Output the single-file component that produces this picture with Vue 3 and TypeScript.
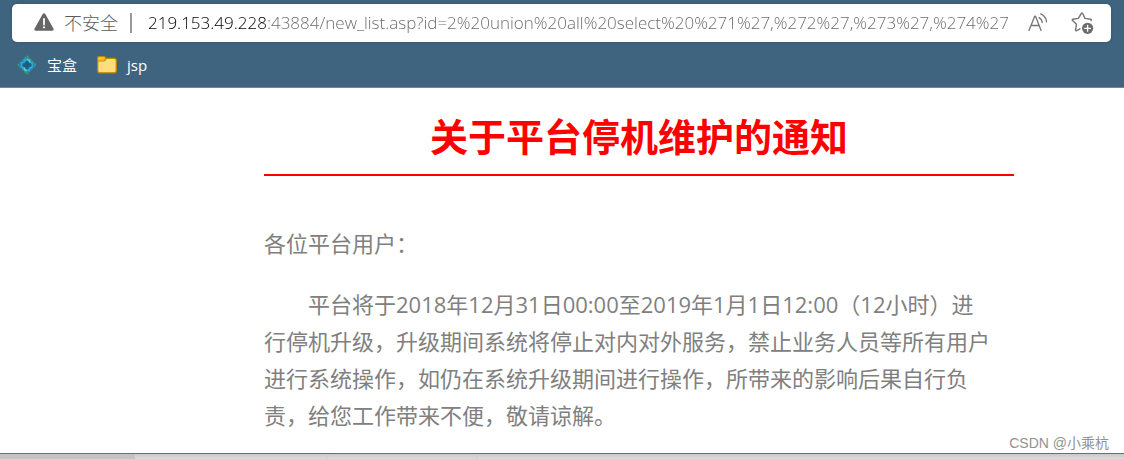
<script setup lang="ts">
import { ref } from 'vue'

interface Bookmark {
  label: string
  kind: 'gem' | 'folder'
}

const address = ref('219.153.49.228:43884/new_list.asp?id=2%20union%20all%20select%20%271%27,%272%27,%273%27,%274%27')

const bookmarks: Bookmark[] = [
  { label: '宝盒', kind: 'gem' },
  { label: 'jsp', kind: 'folder' },
]
</script>

<template>
  <div class="window" lang="zh-CN">
    <header class="chrome">
      <form class="address-bar" @submit.prevent>
        <button class="security" type="button">
          <svg width="20" height="20" viewBox="0 0 20 20" aria-hidden="true">
            <path d="M10 .2c.6 0 1 .3 1.300.8l8.200 14.700c.5 1-.1 2-1.300 2H1.800c-1.200 0-1.800-1-1.300-2L8.700 1c.3-.5.7-.8 1.300-.8z" fill="#666" />
            <path d="M10 6v5.500" stroke="#fff" stroke-width="1.800" stroke-linecap="round" />
            <circle cx="10" cy="14.300" r="1.100" fill="#fff" />
          </svg>
          <span>不安全</span>
        </button>
        <span class="divider"></span>
        <input v-model="address" class="address" type="text" aria-label="地址" spellcheck="false" />
        <button class="tool" type="button" aria-label="大声朗读">
          <svg width="22" height="22" viewBox="0 0 22 22" fill="none" stroke="#757575" stroke-width="1.300" stroke-linecap="round" stroke-linejoin="round" aria-hidden="true">
            <path d="M1 18.500L6.700 4.200h.8l5.600 14.300M3 13.500H11.200" />
            <path d="M11 5.600c1.900 1 3 2.700 3.200 4.900M12.700 1.900c3.500 1.500 5.600 4.300 5.800 8" />
          </svg>
        </button>
        <button class="tool" type="button" aria-label="添加到收藏夹">
          <svg width="24" height="24" viewBox="0 0 24 24" fill="none" aria-hidden="true">
            <path d="M8.900 17.800l-3.300 1.800c-.7.4-1.200 0-1.100-.7l1-5.600-4-3.900c-.5-.5-.3-1.100.4-1.200l5.500-.8 2.900-5.100c.3-.6.9-.6 1.200 0L14 7.400l5.600.8c.7.100.9.700.4 1.200" stroke="#757575" stroke-width="1.400" stroke-linecap="round" stroke-linejoin="round" />
            <circle cx="16.600" cy="17.300" r="5.600" fill="#6c6c6c" />
            <path d="M16.600 14.400v5.800M13.700 17.300h5.800" stroke="#fff" stroke-width="1.300" stroke-linecap="round" />
          </svg>
        </button>
      </form>
      <nav class="bookmarks" aria-label="收藏夹">
        <a v-for="item in bookmarks" :key="item.label" class="bookmark" href="#">
          <svg v-if="item.kind === 'gem'" width="20" height="20" viewBox="0 0 20 20" fill="none" aria-hidden="true">
            <path d="M10 .5L19.500 10 10 19.500.5 10z" fill="#2b7c87" />
            <path d="M10 1.200L18.800 10 10 18.800 1.200 10z" stroke="#38a28d" stroke-width="1.200" stroke-dasharray="2.500 .8" />
            <path d="M7.200 7.200C7.200 3.600 12.800 3.600 12.800 7.200c3.600 0 3.600 5.600 0 5.600 0 3.600-5.600 3.600-5.600 0-3.600 0-3.600-5.600 0-5.600z" fill="#255b7a" stroke="#27a5f0" stroke-width="1.800" />
            <path d="M10 4.500c1.700 0 2.800 1.200 2.800 2.700M7.200 12.800c0 1.600 1.100 2.700 2.800 2.700" stroke="#55d3b0" stroke-width="1.600" />
          </svg>
          <svg v-else width="20" height="20" viewBox="0 0 20 20" fill="none" aria-hidden="true">
            <path d="M.7 3.200c0-1 .5-1.500 1.500-1.500h4.600c.5 0 .9.200 1.300.6l1 1.100h8.200c1.300 0 2 .7 2 2v10.400c0 1.300-.7 2-2 2H2.700c-1.300 0-2-.7-2-2z" fill="#ffdc7c" stroke="#b98900" stroke-width="1.300" />
            <path d="M1.300 3.200c0-.6.300-.9.900-.9h4.500c.4 0 .6.100.9.400l1 1-1.300 1.400c-.3.300-.6.400-1 .4h-5z" fill="#f9c11d" />
            <path d="M.8 6h5.500c.5 0 .9-.2 1.200-.5l1.700-1.900" stroke="#b98900" stroke-width="1.200" />
          </svg>
          <span>{{ item.label }}</span>
        </a>
      </nav>
    </header>

    <main class="page">
      <h1 class="title">关于平台停机维护的通知</h1>
      <div class="notice">
        <p class="greeting">各位平台用户：</p>
        <p class="body">平台将于2018年12月31日00:00至2019年1月1日12:00（12小时）进行停机升级，升级期间系统将停止对内对外服务，禁止业务人员等所有用户进行系统操作，如仍在系统升级期间进行操作，所带来的影响后果自行负责，给您工作带来不便，敬请谅解。</p>
      </div>
      <span class="watermark">CSDN @小乘杭</span>
    </main>

    <footer class="dock">
      <span class="dock-start"></span>
      <span class="dock-tab"></span>
    </footer>
  </div>
</template>

<style>
body {
  margin: 0;
}
</style>

<style scoped>
.window {
  display: flex;
  flex-direction: column;
  min-height: 100vh;
  background: #fff;
  font-family: "Open Sans", "Noto Sans CJK SC", sans-serif;
}

.chrome {
  padding: 4px 13px 0 12px;
  background: #3f6480;
  border-bottom: 1px solid #6c879b;
}

.address-bar {
  display: flex;
  align-items: center;
  height: 38px;
  padding: 0 16px 0 22px;
  background: #fff;
  border-radius: 5px;
  box-shadow: 0 0 3px rgba(20, 45, 65, 0.3);
}

button {
  display: flex;
  align-items: center;
  padding: 0;
  border: 0;
  background: none;
  font: inherit;
}

.security {
  gap: 10px;
  color: #5c5c5c;
  font-size: 18px;
  font-weight: 300;
  line-height: 24px;
  white-space: nowrap;
}

.divider {
  width: 2px;
  height: 20px;
  margin: 0 16px 0 12px;
  background: #999;
}

.address {
  flex: 1;
  min-width: 0;
  height: 30px;
  margin-bottom: 2px;
  padding: 0;
  border: 0;
  outline: 0;
  font-family: "Open Sans", sans-serif;
  font-size: 17px;
  font-weight: 300;
  background: linear-gradient(90deg, #000 118px, #666 118px);
  background-clip: text;
  -webkit-text-fill-color: transparent;
}

.tool {
  margin-left: 18px;
}

.tool + .tool {
  margin-left: 21px;
}

.bookmarks {
  display: flex;
  gap: 20px;
  height: 45px;
  padding-left: 5px;
  align-items: center;
}

.bookmark {
  display: flex;
  align-items: center;
  gap: 10px;
  color: #fff;
  font-size: 15px;
  line-height: 20px;
  text-decoration: none;
}

.page {
  position: relative;
  flex: 1;
  padding: 20px 110px 16px 264px;
}

.title {
  margin: 0;
  padding-bottom: 10px;
  border-bottom: 2px solid #f00;
  color: #f00;
  font-size: 38px;
  line-height: 56px;
  text-align: center;
}

.notice {
  padding: 49px 22px 0 0;
  color: #808080;
  font-size: 22px;
  line-height: 37px;
}

.greeting {
  margin: 0 0 24px;
}

.body {
  margin: 0;
  text-indent: 2em;
}

.watermark {
  position: absolute;
  right: 15px;
  bottom: 0;
  color: #929292;
  font-family: "Liberation Sans", "Noto Sans CJK SC", sans-serif;
  font-size: 14px;
  line-height: 20px;
}

.dock {
  display: flex;
  height: 5px;
  border-top: 1px solid #6e6e6e;
  background: linear-gradient(#c9c9c9, #dcdcdc);
}

.dock-start {
  width: 12%;
  background: #c3c3c3;
}

.dock-tab {
  width: 150px;
  margin-left: 17%;
  border: 1px solid #c6c9cc;
  border-bottom: 0;
  border-radius: 5px 5px 0 0;
}
</style>
